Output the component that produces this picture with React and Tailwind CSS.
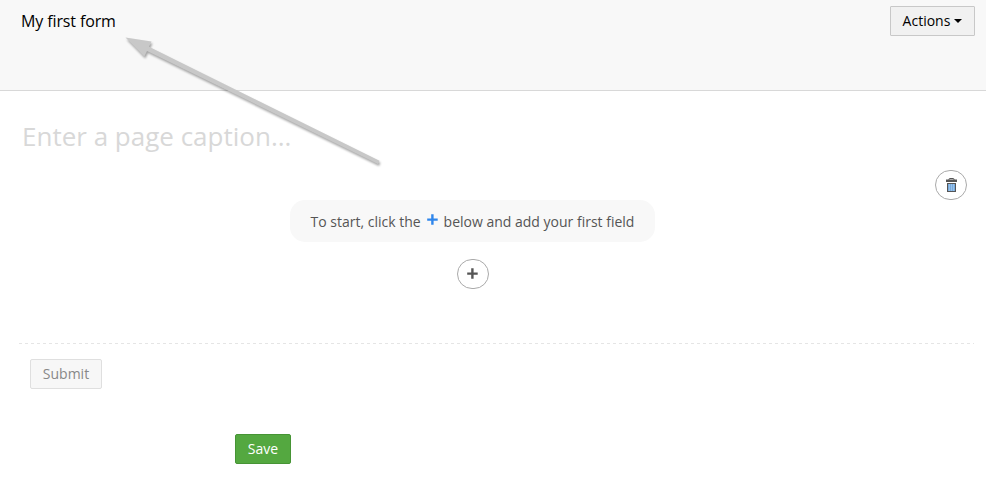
function PlusIcon({ className }) {
  return (
    <svg viewBox="0 0 11 11" className={className} fill="currentColor" aria-hidden="true">
      <path d="M4.2 0.3h2.4v4.1h4.1v2.3H6.6v4.1H4.2V6.7H0.2V4.4h4z" />
    </svg>
  );
}

function TrashIcon() {
  return (
    <svg viewBox="0 0 11 14" className="h-[14px] w-[11px]" aria-hidden="true">
      <path d="M3 2V1.2Q3 .5 3.8 .5H7.2Q8 .5 8 1.2V2" fill="none" stroke="#555" />
      <rect y="1.5" width="11" height="2.5" fill="#555" />
      <rect x="1" y="5" width="9" height="9" fill="#555" />
      <rect x="2" y="6" width="7" height="7" fill="#78aadc" />
      <path d="M3.5 6v7M5.5 6v7M7.5 6v7" stroke="#a5cdf0" strokeWidth=".7" />
    </svg>
  );
}

function PointerArrow() {
  return (
    <svg
      viewBox="0 0 986 488"
      className="pointer-events-none absolute left-0 top-0 h-[488px] w-[986px] drop-shadow-[1px_2px_1px_rgba(0,0,0,0.35)]"
      aria-hidden="true"
    >
      <path d="M125.5 37.5L151.5 41.5L149 46.8L379.5 160.8L378 164L147 51L144.3 56.5Z" fill="#c8c8c8" />
    </svg>
  );
}

export default function App() {
  return (
    <div className="relative flex h-[488px] w-[986px] flex-col overflow-hidden bg-white font-['Open_Sans',sans-serif] text-[14px] leading-5">
      <header className="flex h-[91px] items-start justify-between border-b border-[#d8d8d8] bg-[#f8f8f8] pl-[21px] pr-[11px] pt-[6px]">
        <h1 className="pt-[3px] text-[16px] leading-6 tracking-[-0.12px] text-black">My first form</h1>
        <button className="flex h-[30px] w-[85px] items-center justify-center gap-[4px] rounded-[1px] border border-[#c8c8c8] bg-[#f1f1f1] text-black">
          Actions
          <span className="border-x-4 border-t-4 border-x-transparent border-t-black" />
        </button>
      </header>

      <main className="flex flex-col pl-[19px] pr-[12px]">
        <h2 className="mt-[26px] h-[41px] pl-[3px] text-[26px] leading-[38px] text-[#d8d8d8]">
          Enter a page caption...
        </h2>
        <div className="mt-[12px] flex h-[30px] justify-end pr-[7px]">
          <button className="flex h-[30px] w-[32px] items-center justify-center rounded-[15px] border border-[#aaa] bg-white">
            <TrashIcon />
          </button>
        </div>
        <div className="ml-[271px] flex h-[42px] w-[365px] items-center rounded-[15px] bg-[#f8f8f8] pl-[20.5px] pt-[2px] text-[#555]">
          <span>To start, click the</span>
          <PlusIcon className="mx-[6px] mb-[5px] h-[11px] w-[11px] text-[#2f86eb]" />
          <span>below and add your first field</span>
        </div>
        <button className="ml-[438px] mt-[17px] flex h-[30px] w-[32px] items-center justify-center rounded-[15px] border border-[#aaa] bg-white pb-px pr-px text-[#555]">
          <PlusIcon className="h-[11px] w-[11px]" />
        </button>
        <div className="mt-[54px] h-px bg-[repeating-linear-gradient(90deg,#e5e5e5_0px,#e5e5e5_3px,transparent_3px,transparent_6px)]" />
        <button className="ml-[11px] mt-[15px] h-[30px] w-[72px] rounded-[2px] border border-[#dfdfdf] bg-[#f7f7f7] text-[#888]">
          Submit
        </button>
        <button className="ml-[216px] mt-[45px] h-[30px] w-[56px] rounded-[2px] border border-[#469435] bg-[#54a840] text-white">
          Save
        </button>
      </main>

      <PointerArrow />
    </div>
  );
}
